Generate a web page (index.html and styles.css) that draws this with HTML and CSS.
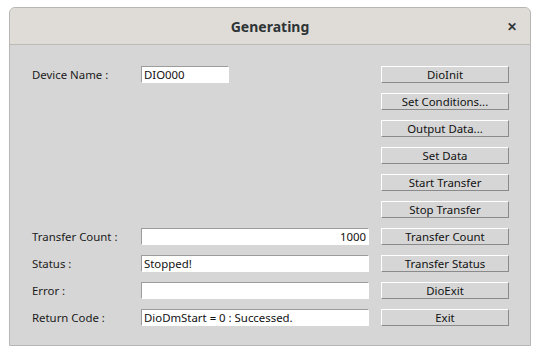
FILE: index.html
```html
<!DOCTYPE html>
<html>

<head>
	<meta charset="utf-8">
	<title>Generating</title>
	<link rel="stylesheet" href="styles.css">
</head>

<body>
	<div class="win">
		<div class="titlebar">
			<span class="title">Generating</span>
			<span class="close">&#x2715;</span>
		</div>
		<div class="body">
			<span class="lbl">Device Name :</span>
			<div class="fld"><input type="text" class="txt short" value="DIO000"></div>
			<button class="btn">DioInit</button>

			<span></span><span></span>
			<button class="btn">Set Conditions...</button>
			<span></span><span></span>
			<button class="btn">Output Data...</button>
			<span></span><span></span>
			<button class="btn">Set Data</button>
			<span></span><span></span>
			<button class="btn">Start Transfer</button>
			<span></span><span></span>
			<button class="btn">Stop Transfer</button>

			<span class="lbl">Transfer Count :</span>
			<div class="fld"><input type="text" class="txt right" value="1000"></div>
			<button class="btn">Transfer Count</button>

			<span class="lbl">Status :</span>
			<div class="fld"><input type="text" class="txt" value="Stopped!"></div>
			<button class="btn">Transfer Status</button>

			<span class="lbl">Error :</span>
			<div class="fld"><input type="text" class="txt" value=""></div>
			<button class="btn">DioExit</button>

			<span class="lbl">Return Code :</span>
			<div class="fld"><input type="text" class="txt" value="DioDmStart = 0 : Successed."></div>
			<button class="btn">Exit</button>
		</div>
	</div>
</body>

</html>
```

FILE: styles.css
```css
body {
	margin: 0;
	padding: 7px 9px 0 9px;
	background-color: #ffffff;
	font-family: "Noto Sans", "Open Sans", sans-serif;
	font-size: 11.4px;
	color: #1a1a1a;
}

.win {
	width: 520px;
	border: 1px solid #b8b6b2;
	border-radius: 6px 6px 0 0;
	background-color: #d6d6d6;
	overflow: hidden;
}

.titlebar {
	height: 36px;
	display: flex;
	align-items: center;
	justify-content: center;
	position: relative;
	background-color: #dfdcd8;
	border-bottom: 1px solid #bdbab5;
}

.title {
	font-size: 14px;
	font-weight: bold;
	color: #2e3436;
}

.close {
	position: absolute;
	right: 13px;
	top: 10px;
	font-size: 12px;
	font-weight: bold;
	color: #2e3436;
}

.body {
	display: grid;
	grid-template-columns: 109px 240px 128px;
	row-gap: 10px;
	grid-auto-rows: 17px;
	padding: 21px 21px 19px 22px;
}

.lbl {
	line-height: 17px;
}

.fld {
	display: flex;
}

.txt {
	box-sizing: border-box;
	width: 228px;
	height: 17px;
	margin: 0;
	padding: 0 2px;
	border: 1px solid #ffffff;
	border-top-color: #9c9c9c;
	border-left-color: #9c9c9c;
	background-color: #ffffff;
	font-family: "Noto Sans", "Open Sans", sans-serif;
	font-size: 11.4px;
	color: #111111;
	outline: none;
}

.short {
	width: 88px;
}

.right {
	text-align: right;
}

.btn {
	box-sizing: border-box;
	height: 17px;
	margin: 0;
	padding: 0;
	border: 1px solid #8a8a8a;
	border-top-color: #ffffff;
	border-left-color: #ffffff;
	background-color: #d6d6d6;
	font-family: "Noto Sans", "Open Sans", sans-serif;
	font-size: 11.4px;
	line-height: 15px;
	color: #111111;
}
```
